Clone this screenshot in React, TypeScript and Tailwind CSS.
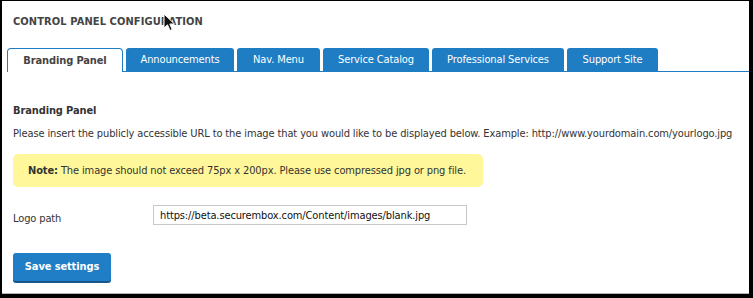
import React from "react";

const tabs = [
  { label: "Branding Panel", w: "w-[116px]" },
  { label: "Announcements", w: "w-[108px]" },
  { label: "Nav. Menu", w: "w-[83px]" },
  { label: "Service Catalog", w: "w-[106px]" },
  { label: "Professional Services", w: "w-[132px]" },
  { label: "Support Site", w: "w-[91px]" },
];

function Cursor() {
  return (
    <svg
      className="absolute left-[161px] top-[12px]"
      width="13"
      height="19"
      viewBox="0 0 13 19"
    >
      <path
        d="M1 1 L1 15 L4.5 11.8 L7 17.5 L9.2 16.5 L6.8 11 L11.5 11 Z"
        fill="#111"
        stroke="#fff"
        strokeWidth="1"
        strokeLinejoin="round"
      />
    </svg>
  );
}

const font = { fontFamily: '"DejaVu Sans Condensed", "DejaVu Sans", sans-serif' };

export default function App() {
  return (
    <div className="h-[298px] w-[753px] bg-black pb-[4px] pl-[2px] pr-[4px] pt-px">
      <div
        className="relative h-full border-b border-[#b5b5b5] bg-white text-[11px] leading-[14px] tracking-[-0.12px] text-[#333]"
        style={font}
      >
        <div className="pl-[11px] pt-[14px] font-bold uppercase tracking-[0.1px] text-[#444]">
          Control Panel Configuration
        </div>
        <Cursor />

        <div className="ml-[5px] mt-[19px] flex gap-[3px] border-b border-[#1f7dc4]">
          {tabs.map((t, i) =>
            i === 0 ? (
              <div
                key={t.label}
                className={`-mb-px flex h-[24px] items-center justify-center rounded-t-[4px] border border-b-0 border-[#1f7dc4] bg-white font-bold text-[#444] ${t.w}`}
              >
                {t.label}
              </div>
            ) : (
              <div
                key={t.label}
                className={`flex h-[23px] items-center justify-center rounded-t-[3px] bg-[#1f7dc4] text-white ${t.w}`}
              >
                {t.label}
              </div>
            )
          )}
        </div>

        <div className="px-[11px]">
          <div className="mt-[32px] font-bold">Branding Panel</div>
          <p className="mt-[9px] whitespace-nowrap">
            Please insert the publicly accessible URL to the image that you would like to be displayed below. Example: http://www.yourdomain.com/yourlogo.jpg
          </p>
          <div className="mt-[13px] flex h-[33px] w-[470px] items-center rounded-[5px] bg-[#fff799] pl-[15px]">
            <span>
              <b>Note:</b> The image should not exceed 75px x 200px. Please use compressed jpg or png file.
            </span>
          </div>

          <div className="mt-[18px] flex items-start">
            <label className="w-[140px] pt-[7px]">Logo path</label>
            <input
              readOnly
              value="https://beta.securembox.com/Content/images/blank.jpg"
              className="h-[20px] w-[314px] border border-[#c8c8c8] px-[6px] text-[11px] tracking-[-0.12px] text-[#111] outline-none"
              style={font}
            />
          </div>

          <button className="mt-[27px] h-[28px] w-[98px] rounded-[3px] bg-[#1f7ec6] font-bold text-white shadow-[0_2px_0_#15588c]">
            Save settings
          </button>
        </div>
      </div>
    </div>
  );
}
